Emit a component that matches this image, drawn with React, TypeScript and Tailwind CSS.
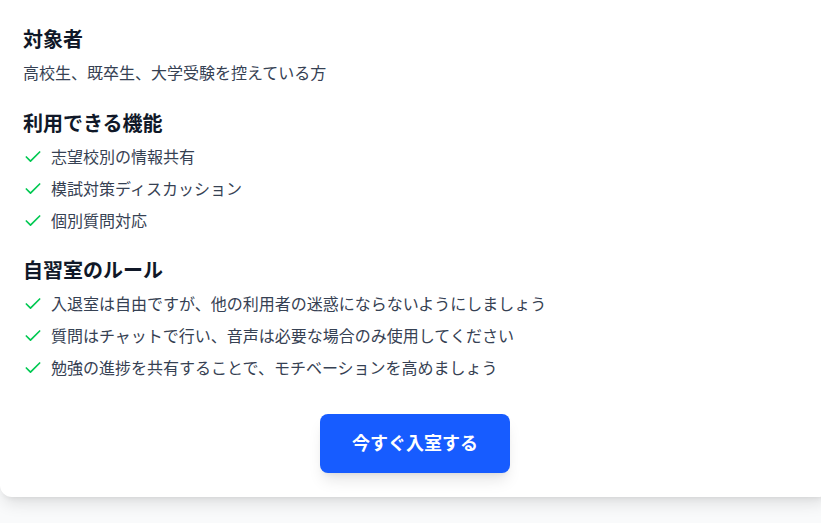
import { Check } from "lucide-react";

const features = ["志望校別の情報共有", "模試対策ディスカッション", "個別質問対応"];

const rules = [
  "入退室は自由ですが、他の利用者の迷惑にならないようにしましょう",
  "質問はチャットで行い、音声は必要な場合のみ使用してください",
  "勉強の進捗を共有することで、モチベーションを高めましょう",
];

function CheckList({ items }: { items: string[] }) {
  return (
    <ul className="flex flex-col gap-2">
      {items.map((item) => (
        <li key={item} className="flex items-center gap-2 text-base leading-6 text-gray-700">
          <Check className="w-5 h-5 text-green-500 shrink-0" strokeWidth={2} />
          <span>{item}</span>
        </li>
      ))}
    </ul>
  );
}

export default function App() {
  return (
    <div
      className="min-h-[523px] w-full overflow-hidden bg-gray-50"
      style={{ fontFamily: 'Inter, "Noto Sans CJK JP", sans-serif' }}
    >
      <div className="w-[830px] bg-white rounded-b-xl shadow-lg px-[23px] pt-[26px] pb-6">
        {/* Target users */}
        <section>
          <h3 className="text-xl font-bold text-gray-900 leading-7">対象者</h3>
          <p className="mt-[7px] text-base leading-6 text-gray-700">
            高校生、既卒生、大学受験を控えている方
          </p>
        </section>

        {/* Features */}
        <section className="mt-[25px]">
          <h3 className="text-xl font-bold text-gray-900 leading-7">利用できる機能</h3>
          <div className="mt-[7px]">
            <CheckList items={features} />
          </div>
        </section>

        {/* Rules */}
        <section className="mt-6">
          <h3 className="text-xl font-bold text-gray-900 leading-7">自習室のルール</h3>
          <div className="mt-[7px]">
            <CheckList items={rules} />
          </div>
        </section>

        <div className="mt-[34px] flex justify-center">
          <button className="w-[190px] h-[59px] rounded-lg bg-[#175cff] text-white text-lg font-bold shadow-lg">
            今すぐ入室する
          </button>
        </div>
      </div>
    </div>
  );
}
